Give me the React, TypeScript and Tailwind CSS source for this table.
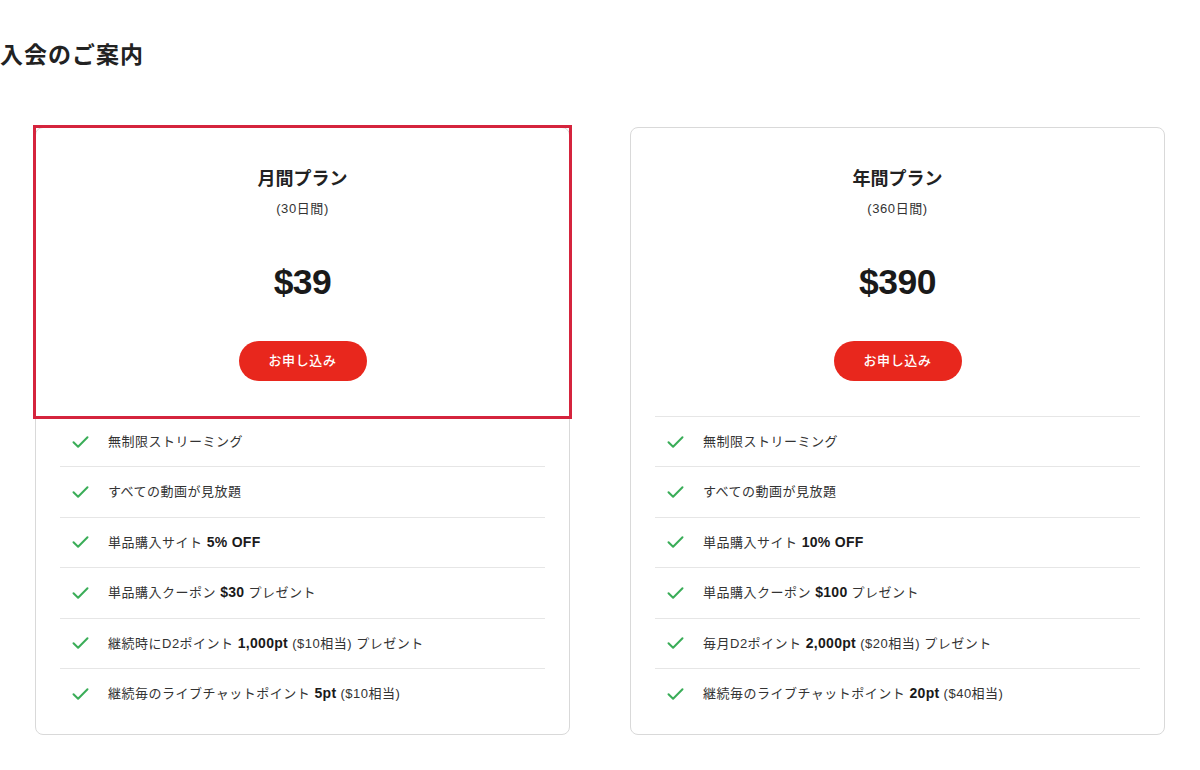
import React from "react";

type Feature = { pre: string; bold?: string; post?: string };

const plans: { name: string; term: string; price: string; features: Feature[]; highlight?: boolean }[] = [
  {
    name: "月間プラン",
    term: "(30日間)",
    price: "$39",
    highlight: true,
    features: [
      { pre: "無制限ストリーミング" },
      { pre: "すべての動画が見放題" },
      { pre: "単品購入サイト ", bold: "5% OFF" },
      { pre: "単品購入クーポン ", bold: "$30", post: " プレゼント" },
      { pre: "継続時にD2ポイント ", bold: "1,000pt", post: " ($10相当) プレゼント" },
      { pre: "継続毎のライブチャットポイント ", bold: "5pt", post: " ($10相当)" },
    ],
  },
  {
    name: "年間プラン",
    term: "(360日間)",
    price: "$390",
    features: [
      { pre: "無制限ストリーミング" },
      { pre: "すべての動画が見放題" },
      { pre: "単品購入サイト ", bold: "10% OFF" },
      { pre: "単品購入クーポン ", bold: "$100", post: " プレゼント" },
      { pre: "毎月D2ポイント ", bold: "2,000pt", post: " ($20相当) プレゼント" },
      { pre: "継続毎のライブチャットポイント ", bold: "20pt", post: " ($40相当)" },
    ],
  },
];

function Check() {
  return (
    <svg width="17" height="14" viewBox="0 0 17 14" fill="none" className="shrink-0">
      <path d="M1.5 7.2l4.6 4.6L15.5 2.2" stroke="#3aad58" strokeWidth="2" strokeLinecap="round" strokeLinejoin="round" />
    </svg>
  );
}

function PlanCard({ plan }: any) {
  return (
    <div className="relative flex-1 bg-white border border-[#d9d9d9] rounded-[8px] pt-[38px] pb-[16px]">
      {plan.highlight && (
        <div className="absolute -left-[3px] -top-[3px] w-[539px] h-[294px] border-[3px] border-[#d5243d] pointer-events-none"></div>
      )}
      <div className="flex flex-col items-center">
        <div className="text-[18px] leading-[26px] font-bold text-[#222]">{plan.name}</div>
        <div className="mt-[7px] text-[13px] leading-[20px] text-[#333] tracking-[0.6px]">{plan.term}</div>
        <div className="mt-[42px] text-[35.5px] leading-[42px] font-bold text-[#1a1a1a] tracking-[-0.5px]">{plan.price}</div>
        <button className="mt-[38px] h-10 w-[128px] rounded-full bg-[#e8271d] text-white text-[13px] font-medium tracking-[0.6px]">
          お申し込み
        </button>
      </div>
      <ul className="mt-[35px] mx-[24px]">
        {plan.features.map((f: Feature, i: number) => (
          <li key={i} className="h-[50.4px] border-t border-[#e6e6e6] flex items-center pl-[12px] gap-[19px] text-[13px] text-[#333] tracking-[0.5px]">
            <Check />
            <span>
              {f.pre}
              {f.bold && <span className="font-bold text-[#1a1a1a] text-[14px] tracking-[0.3px]">{f.bold}</span>}
              {f.post}
            </span>
          </li>
        ))}
      </ul>
    </div>
  );
}

export default function App() {
  return (
    <div
      className="w-[1200px] h-[770px] bg-white overflow-hidden"
      style={{ fontFamily: '"Liberation Sans", "Noto Sans CJK JP", sans-serif' }}
    >
      <h1 className="pt-[40px] text-[23px] leading-[30px] font-bold text-[#222] tracking-[1px]">入会のご案内</h1>
      <div className="mt-[57px] px-[35px] flex gap-[60px]">
        {plans.map((p) => (
          <PlanCard key={p.name} plan={p} />
        ))}
      </div>
    </div>
  );
}
